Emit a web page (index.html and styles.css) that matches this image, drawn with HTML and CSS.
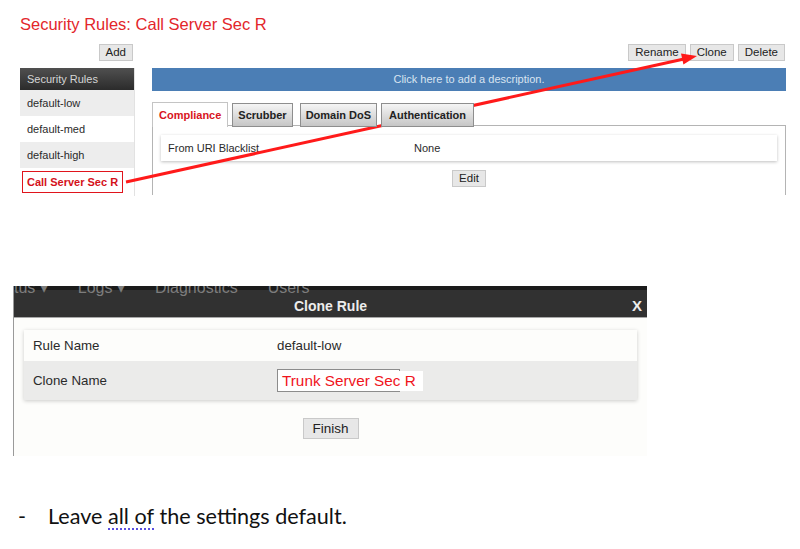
FILE: index.html
```html
<!DOCTYPE html>
<html lang="en">
<head>
    <meta charset="UTF-8">
    <meta name="viewport" content="width=device-width, initial-scale=1.0">
    <title>Security Rules - Clone</title>
    <link rel="stylesheet" href="styles.css">
</head>
<body>
    <!-- First screenshot: security rules page -->
    <div class="shot-rules">
        <h1 class="page-title">Security Rules: Call Server Sec R</h1>

        <div class="rules">
            <div class="side-tools">
                <button class="btn">Add</button>
            </div>
            <div class="main-tools">
                <button class="btn">Rename</button>
                <button class="btn">Clone</button>
                <button class="btn">Delete</button>
            </div>

            <div class="side-list">
                <div class="side-head">Security Rules</div>
                <div class="side-row shaded">default-low</div>
                <div class="side-row">default-med</div>
                <div class="side-row shaded">default-high</div>
                <div class="side-row current"><span class="mark">Call Server Sec R</span></div>
            </div>

            <div class="main-pane">
                <div class="desc-bar">Click here to add a description.</div>
                <div class="tabs">
                    <span class="tab active">Compliance</span>
                    <span class="tab">Scrubber</span>
                    <span class="tab">Domain DoS</span>
                    <span class="tab wide-tab">Authentication</span>
                </div>
                <div class="tab-panel">
                    <div class="card">
                        <div class="card-row">
                            <span>From URI Blacklist</span>
                            <span>None</span>
                        </div>
                    </div>
                    <div class="center">
                        <button class="btn">Edit</button>
                    </div>
                </div>
            </div>
        </div>

        <!-- Red pointer from the selected rule to the Clone button -->
        <svg class="pointer" width="800" height="200" viewBox="0 0 800 200">
            <line x1="126" y1="182" x2="684" y2="59" stroke="#ff1a1a" stroke-width="3" />
            <polygon points="697,56 683.4,64.4 681,53.6" fill="#ff1a1a" />
        </svg>
    </div>

    <!-- Second screenshot: clone dialog -->
    <div class="shot-clone">
        <div class="modal-head">
            <div class="nav-peek">
                <span class="nav-line">tus &#9662;<i></i>Logs &#9662;<i></i>Diagnostics<i></i>Users</span>
            </div>
            <div class="modal-title">Clone Rule<span class="close">X</span></div>
        </div>
        <div class="modal-body">
            <div class="card wide">
                <div class="form-row">
                    <span>Rule Name</span>
                    <span>default-low</span>
                </div>
                <div class="form-row shaded">
                    <span>Clone Name</span>
                    <div class="clone-input"><span class="typed">Trunk Server Sec R</span></div>
                </div>
            </div>
            <div class="center">
                <button class="btn big">Finish</button>
            </div>
        </div>
    </div>

    <!-- Document text -->
    <div class="note">
        <span class="dash">-</span>
        <span>Leave <span class="grammar">all of</span> the settings default.</span>
    </div>
</body>
</html>
```

FILE: styles.css
```css
body {
    margin: 0;
    padding-bottom: 20px;
    font-family: "Liberation Sans", Arial, sans-serif;
    background: #ffffff;
    color: #222;
    position: relative;
}

.shot-rules {
    height: 197px;
}

.page-title {
    margin: 0;
    padding: 14px 0 0 20px;
    font-size: 16.5px;
    line-height: 20px;
    font-weight: normal;
    color: #e3262b;
}

.rules {
    display: grid;
    grid-template-columns: 115px 634px;
    column-gap: 17px;
    row-gap: 7px;
    margin: 10px 0 0 20px;
}

.side-tools {
    display: flex;
    justify-content: flex-end;
    padding-right: 2px;
}

.main-tools {
    display: flex;
    justify-content: flex-end;
    gap: 4px;
    padding-right: 1px;
}

.btn {
    height: 17px;
    padding: 0 6px;
    font-family: "Liberation Sans", Arial, sans-serif;
    font-size: 11.5px;
    color: #222;
    background: #e7e7e7;
    border: 1px solid #c9c9c9;
    border-radius: 0;
    line-height: 15px;
}

.btn.big {
    height: 21px;
    width: 56px;
    font-size: 13.5px;
    line-height: 19px;
}

.side-list {
    border-right: 1px solid #e2e2e2;
}

.side-head {
    height: 22px;
    line-height: 22px;
    padding-left: 7px;
    font-size: 11px;
    color: #d6d6d6;
    background: linear-gradient(#505050, #2b2b2b);
}

.side-row {
    height: 26px;
    line-height: 26px;
    padding-left: 7px;
    font-size: 11px;
    color: #2a2a2a;
}

.side-row.shaded {
    background: #ededed;
}

.side-row.current {
    height: 28px;
    padding-left: 2px;
    display: flex;
    align-items: center;
}

.mark {
    display: inline-block;
    height: 20px;
    line-height: 20px;
    padding: 0 4px;
    border: 1px solid #e0141c;
    font-weight: bold;
    color: #d4111a;
}

.desc-bar {
    height: 23px;
    line-height: 23px;
    text-align: center;
    font-size: 11px;
    color: #d9e4f1;
    background: #4b7eb5;
}

.tabs {
    display: flex;
    gap: 4px;
    margin-top: 11px;
    height: 24px;
    position: relative;
    z-index: 1;
}

.tab {
    padding: 0 5px;
    height: 22px;
    margin-top: 1px;
    line-height: 22px;
    font-size: 11px;
    font-weight: bold;
    color: #222;
    border: 1px solid #8e8e8e;
    background: linear-gradient(#f5f5f5, #c6c6c6);
}

.tab.active {
    margin-top: 0;
    padding: 0 6px;
    height: 24px;
    line-height: 24px;
    color: #d8141d;
    background: #ffffff;
    border-color: #c4c4c4;
    border-bottom: none;
}

.tabs .tab:nth-child(3) {
    margin-left: 3px;
}

.tab.wide-tab {
    padding: 0 7px;
}

.tab-panel {
    height: 70px;
    margin-top: -1px;
    border: 1px solid #b4b4b4;
    border-bottom: none;
    box-sizing: border-box;
    padding: 9px 8px 0 8px;
}

.card {
    background: #ffffff;
    box-shadow: 0 1px 3px rgba(0, 0, 0, 0.25);
}

.card-row {
    display: grid;
    grid-template-columns: 246px 1fr;
    height: 26px;
    line-height: 26px;
    padding-left: 7px;
    font-size: 11px;
    color: #2a2a2a;
}

.center {
    display: flex;
    justify-content: center;
    margin-top: 9px;
}

.pointer {
    position: absolute;
    top: 0;
    left: 0;
    pointer-events: none;
}

/* clone dialog */
.shot-clone {
    width: 633px;
    margin: 89px 0 0 13px;
    border-left: 1px solid #9a9a9a;
    background: #fdfdfb;
}

.modal-head {
    height: 31px;
    background: linear-gradient(#1b1b1b 0, #1b1b1b 4px, #313131 4px);
    border-bottom: 1px solid #a8a8a8;
}

.nav-peek {
    height: 11px;
    overflow: hidden;
}

.nav-line {
    display: block;
    margin-top: -8px;
    white-space: nowrap;
    font-size: 16px;
    line-height: 20px;
    color: #7d7d7d;
}

.nav-line i {
    display: inline-block;
    width: 30px;
}

.modal-title {
    position: relative;
    height: 20px;
    line-height: 18px;
    text-align: center;
    font-size: 14px;
    font-weight: bold;
    color: #ececec;
}

.close {
    position: absolute;
    right: 5px;
    top: 0;
    font-size: 15px;
}

.modal-body {
    padding: 12px 10px 17px 10px;
}

.card.wide {
    box-shadow: 0 1px 4px rgba(0, 0, 0, 0.2);
    background: #fdfdfb;
}

.form-row {
    display: grid;
    grid-template-columns: 244px 1fr;
    align-items: center;
    height: 31px;
    padding-left: 9px;
    font-size: 13.3px;
    color: #2a2a2a;
}

.form-row.shaded {
    height: 39px;
    background: #ebebea;
}

.clone-input {
    width: 123px;
    height: 23px;
    box-sizing: border-box;
    border: 1px solid #8c8c8c;
    background: #ffffff;
    padding: 1px 0 0 1px;
    white-space: nowrap;
}

.typed {
    display: inline-block;
    height: 20px;
    line-height: 20px;
    padding: 0 7px 0 3px;
    font-size: 15.3px;
    color: #f0141c;
    background: #ffffff;
}

.modal-body .center {
    margin-top: 18px;
}

/* word document text */
.note {
    display: flex;
    margin: 47px 0 0 18px;
    font-family: Lato, "Open Sans", sans-serif;
    font-size: 21.6px;
    line-height: 26px;
    color: #111;
}

.dash {
    width: 30px;
}

.grammar {
    display: inline-block;
    padding-bottom: 1px;
    margin-bottom: -1px;
    background-image: repeating-linear-gradient(90deg, #5a4fe0 0 2px, transparent 2px 4px);
    background-size: 100% 2px;
    background-position: 0 100%;
    background-repeat: no-repeat;
}
```
